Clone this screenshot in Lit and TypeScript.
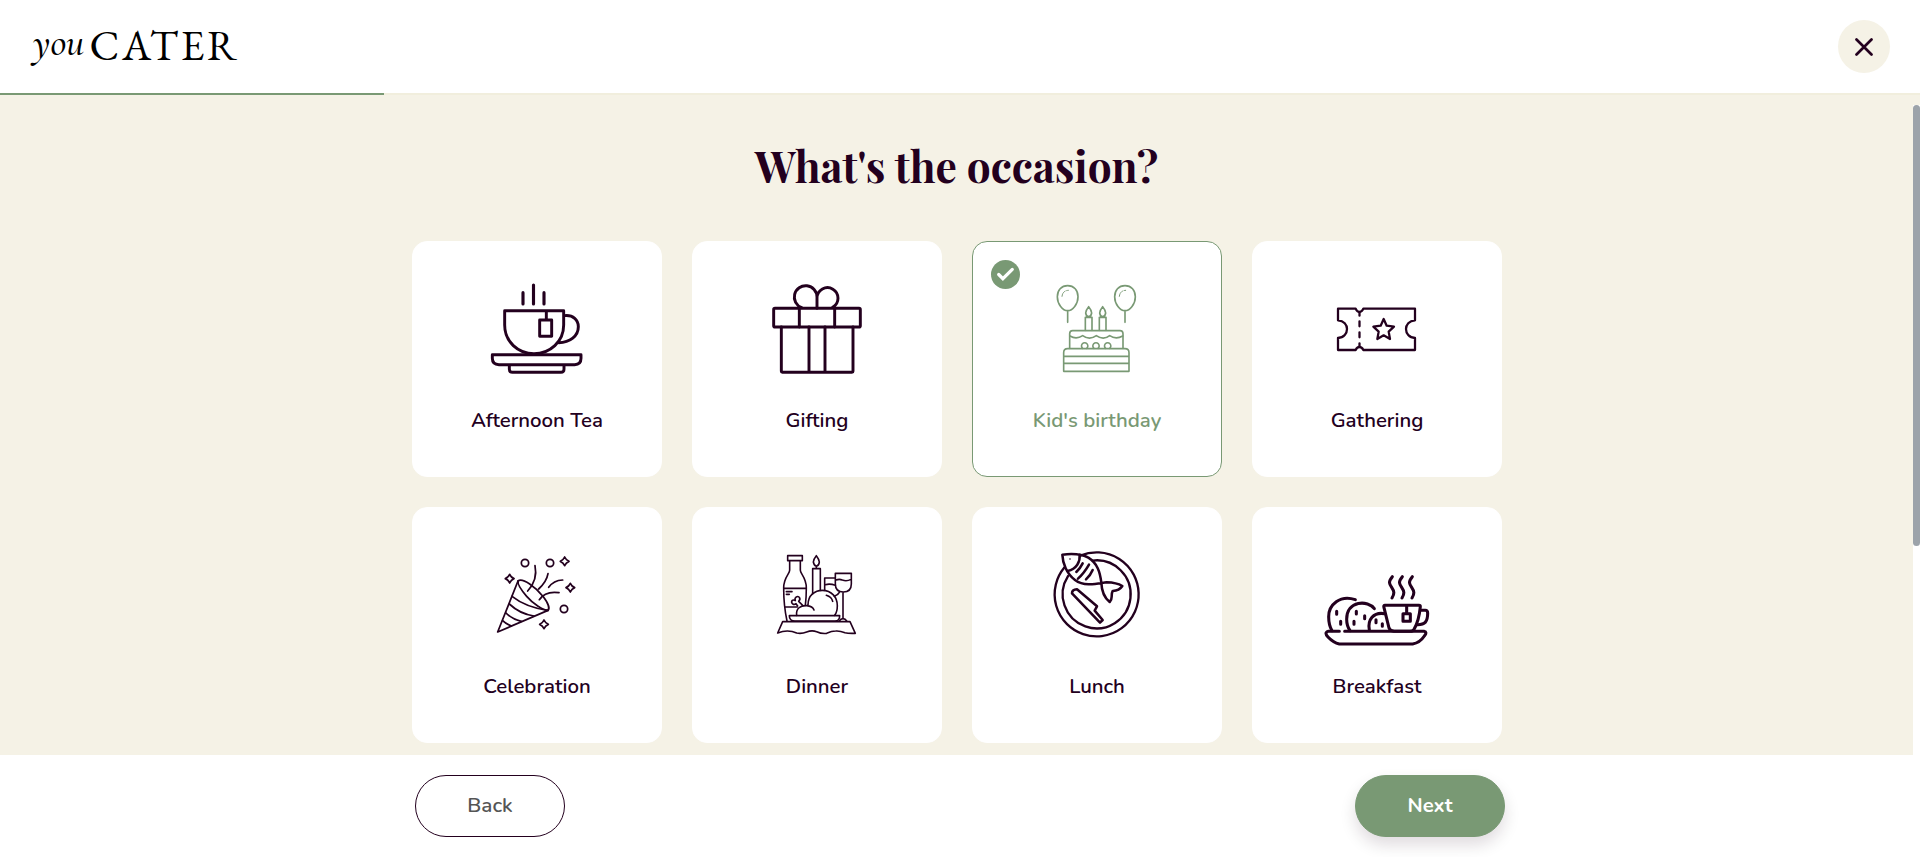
import { LitElement, html, css, svg } from "lit";
import type { SVGTemplateResult } from "lit";
import { customElement, property, state } from "lit/decorators.js";
import { classMap } from "lit/directives/class-map.js";
import { styleMap } from "lit/directives/style-map.js";

const sparkle = (x: number, y: number) => svg`
  <path transform="translate(${x} ${y})" d="M0-13Q4-4 13 0Q4 4 0 13Q-4 4-13 0Q-4-4 0-13Z"/>`;

const balloon = (x: number) => svg`
  <g transform="translate(${x} 0)">
    <path d="M0 167C19 167 31 181 31 200C31 222 15 242 0 242C-15 242-31 222-31 200C-31 181-19 167 0 167ZM0 242V277"/>
    <path stroke-width="3" stroke-dasharray="8 4 7 5" d="M-17 199Q-15 182 2 181"/>
  </g>`;

const candle = (x: number) => svg`
  <path transform="translate(${x} 0)"
    d="M-10 301V262H10V301M0 230Q-9 241-9 249Q-7 260 0 260Q7 260 9 249Q9 241 0 230Z"/>`;

const icons: Record<string, SVGTemplateResult> = {
  tea: svg`<g stroke-width="8.8">
    <path stroke-width="9.4" d="M369 188V222M400.5 165V222M432 188V222"/>
    <path d="M314 242H491V285C491 335 450 371 402 371C354 371 314 335 314 285ZM439 244V270M419 270H455V319H419Z"/>
    <path d="M493 257C520 254 535 270 535 290C535 318 510 337 476 338"/>
    <path d="M277 374H543V385Q543 404 524 404H297Q277 404 277 385ZM328 404V418Q328 427 337 427H483Q492 427 492 418V404"/>
  </g>`,
  gift: svg`<g stroke-width="8.8">
    <rect x="281" y="235" width="260" height="56" rx="4"/>
    <path d="M358 235V291M464 235V291M304 291V424Q304 427 307 427H516Q519 427 519 424V291M387 291V427M435 291V427"/>
    <path d="M411 235V201A34 34 0 1 0 365 233M411 204A31.5 31.5 0 1 1 458 232"/>
  </g>`,
  birthday: svg`<g stroke-width="4.9">
    ${balloon(323)}${balloon(495)}${candle(386)}${candle(428)}
    <path d="M329 355V311Q329 302 338 302H480Q489 302 489 311V355"/>
    <path d="M330 318Q349 330 368 317Q388 332 409 317Q430 332 449 317Q468 330 488 318"/>
    <path d="M368 355A9.5 9.5 0 1 1 380 355M402 355A9.5 9.5 0 1 1 414 355M437 355A9.5 9.5 0 1 1 449 355"/>
    <path d="M311 424V368Q311 356 323 356H495Q507 356 507 368V424ZM311 379H507M311 400H507"/>
  </g>`,
  ticket: svg`<g stroke-width="6.8">
    <path d="M294 236H347Q351 246 358 246Q366 246 370 236H525V271C507 272 498 284 498 297C498 310 507 323 525 324V360H370Q366 351 358 351Q351 351 347 360H294V324C312 323 321 310 321 297C321 284 312 272 294 271Z"/>
    <path d="M358.5 248V257M358.5 274V289M358.5 307V322M358.5 340V349"/>
    <path d="M431 267L440 287L462 290L446 305L450 327L431 316L412 327L416 305L400 290L422 287Z"/>
  </g>`,
  popper: svg`<g stroke-width="5.2">
    <path d="M354 243L293 396L444 331"/>
    <path d="M354 243C368 232 408 262 430 290C446 311 449 326 444 331C430 332 400 312 380 289C362 268 352 252 354 243Z"/>
    <path d="M336 289Q378 322 444 331M328 312Q360 342 402 348M318 339Q335 357 364 364M308 362Q318 372 334 378"/>
    <path d="M405 197Q414 240 383 273M444 221Q440 245 416 267M446 262Q461 241 488 240M418 299Q436 272 477 278"/>
    <circle cx="375" cy="189" r="11"/><circle cx="450" cy="189" r="11"/><circle cx="492" cy="327" r="11"/>
    ${sparkle(329, 236)}${sparkle(494, 184)}${sparkle(511, 263)}${sparkle(432, 373)}
  </g>`,
  dinner: svg`<g stroke-width="4.8">
    <path d="M323 167H367V182H323ZM329 182V211C329 222 311 232 311 264C311 300 316 340 321 363M361 182V211C361 222 379 232 379 264C379 285 378 300 376 316M311 265H379M315 321H352M319 275H336M319 283H328"/>
    <path d="M353 318L348 311C341 317 332 309 336 302C340 298 346 302 346 302C342 293 352 287 357 291C362 296 360 300 356 304L368 316"/>
    <path d="M398 282V206H421V271M409 206V199M409 167Q400 178 400 186Q402 197 409 199Q417 197 418 186Q417 177 409 167Z"/>
    <path d="M466 220H514V252C514 268 504 276 490 276C476 276 466 268 466 252ZM468 240Q478 236 487 240Q500 245 513 238M489 276V356M478 363Q482 356 489 356Q496 356 500 363"/>
    <path d="M466 234H434V271M436 254Q450 250 466 256M463 289Q474 285 478 277"/>
    <path d="M384 315C384 285 405 271 427 271C455 271 472 292 472 317C472 330 470 338 464 346M350 346C347 325 362 316 380 317C392 318 400 324 402 330M439 286Q455 291 458 304"/>
    <path d="M328 347H479Q479 363 465 363H345Q328 363 328 347Z"/>
    <path d="M308 365L293 399Q308 393 322 393Q337 393 350 399Q365 402 380 396Q395 390 410 395Q425 402 440 400Q455 393 467 393Q480 392 495 398Q505 401 526 400L510 365Z"/>
  </g>`,
  lunch: svg`<g stroke-width="7.6">
    <path stroke-width="7" d="M361 167A126 126 0 1 1 313 202.6M398 181.7A102 102 0 1 1 324 228.1"/>
    <path d="M307 164C340 160 365 162 385 173C412 190 420 215 424 248C425 275 435 295 449 306Q455 300 455 290Q455 278 458 273Q478 272 487 258Q470 248 440 247C415 250 375 262 345 240C320 222 308 190 307 164Z"/>
    <path d="M359 164C361 185 350 207 323 213M368 190Q360 206 349 216M387 194Q372 220 354 236M398 210Q392 225 378 238"/>
    <path d="M336 280Q336 269 351 268L411 319L404 332L428 360L420 368Z"/>
    <path stroke-width="5" d="M330 177V177.1"/>
  </g>`,
  breakfast: svg`<g stroke-width="9.2">
    <path d="M457 230C444 246 448 252 455 262C463 274 464 281 456 294M487 230C474 246 478 252 485 262C493 274 494 281 486 294M517 230C504 246 508 252 515 262C523 274 524 281 516 294"/>
    <path d="M434 316H537Q541 316 541 320C538 350 533 370 522 388Q519 394 510 394H462Q450 392 447 384L432 323Q430 316 434 316ZM500 318V340M489 341H511V364H489Z"/>
    <path d="M543 331H556Q563 331 563 340C563 365 555 374 533 374"/>
    <path d="M346 299C300 283 266 315 266 350Q266 375 276 392M403 326C385 300 320 300 320 358Q320 378 330 392M434 341C400 335 382 360 388 390"/>
    <path d="M290 334V343M302 364V373M349 334V342M342 364V373M374 347V356M408 359V368M427 371V379"/>
    <path d="M298 394H264Q252 398 264 411Q280 428 298 432H518Q540 428 553 408Q563 396 552 394H314"/>
  </g>`,
};

@customElement("occasion-card")
export class OccasionCard extends LitElement {
  @property() label = "";
  @property() icon = "";
  @property() origin = "231 141";
  @property({ type: Boolean }) selected = false;

  static styles = css`
    :host { display: block; }
    .card {
      box-sizing: border-box;
      position: relative;
      width: 250px;
      height: 236px;
      padding: 35px 0 0;
      border: 1px solid #fff;
      border-radius: 15px;
      background: #fff;
      color: #23001e;
      display: flex;
      flex-direction: column;
      align-items: center;
      cursor: pointer;
    }
    .selected { border-color: #799974; color: #799974; }
    .icon {
      width: 120px;
      height: 104px;
      fill: none;
      stroke: currentColor;
      stroke-linecap: round;
      stroke-linejoin: round;
    }
    .label {
      margin-top: 26px;
      font: 600 20.4px/27px Nunito, Lato, "Open Sans", sans-serif;
      white-space: nowrap;
    }
    .selected .label { font-weight: 650; }
    .badge { position: absolute; left: 18px; top: 18px; width: 29px; height: 29px; }
  `;

  render() {
    return html`
      <div class=${classMap({ card: true, selected: this.selected })}>
        ${this.selected
          ? html`<svg class="badge" viewBox="0 0 29 29">
              <circle cx="14.5" cy="14.5" r="14.5" fill="#799974" />
              <path d="M7.7 14.5L11.9 18.7L21.3 9.4" fill="none" stroke="#fff" stroke-width="3.2" stroke-linecap="round" />
            </svg>`
          : null}
        <svg class="icon" viewBox="${this.origin} 360 312">${icons[this.icon]}</svg>
        <div class="label">${this.label}</div>
      </div>
    `;
  }
}

@customElement("app-root")
export class AppRoot extends LitElement {
  @state() private selected = "Kid's birthday";
  private progress = 20;
  private occasions = [
    { label: "Afternoon Tea", icon: "tea" },
    { label: "Gifting", icon: "gift" },
    { label: "Kid's birthday", icon: "birthday" },
    { label: "Gathering", icon: "ticket" },
    { label: "Celebration", icon: "popper" },
    { label: "Dinner", icon: "dinner" },
    { label: "Lunch", icon: "lunch" },
    { label: "Breakfast", icon: "breakfast" },
  ];

  static styles = css`
    :host {
      display: flex;
      flex-direction: column;
      height: 100vh;
      overflow: hidden;
      background: #fff;
      color: #23001e;
      font-family: Nunito, Lato, "Open Sans", sans-serif;
    }
    .header {
      flex: 0 0 93px;
      box-sizing: border-box;
      padding: 0 30px 0 28px;
      display: flex;
      align-items: center;
      justify-content: space-between;
    }
    .logo { width: 220px; height: 93px; fill: #000; }
    .you { font: italic 500 39px "Cormorant Garamond", "Liberation Serif", serif; }
    .cater { font: 42px "EB Garamond", "Liberation Serif", serif; letter-spacing: 2.7px; }
    .close {
      width: 52px;
      height: 53px;
      padding: 0;
      border: 0;
      border-radius: 50%;
      background: #f5f2e6;
      display: grid;
      place-items: center;
      cursor: pointer;
    }
    .cross { width: 18px; height: 18px; stroke: #23001e; stroke-width: 2.7; stroke-linecap: round; }
    .track { flex: 0 0 2px; background: #f1eedd; }
    .bar { height: 2px; background: #799974; }
    .main { flex: 1; min-height: 0; display: flex; background: #f5f2e6; }
    .content { flex: 1; display: flex; flex-direction: column; align-items: center; overflow: hidden; }
    .title { flex: none; margin: 43px 0 0; font: 700 42.4px/56px "Playfair Display", "Liberation Serif", serif; }
    .grid { display: grid; grid-template-columns: repeat(4, 250px); gap: 30px; margin: 47px 0 0 1px; }
    .scroll { flex: 0 0 7px; margin-top: 10px; background: #fff; }
    .thumb { height: 441px; border-radius: 4px; background: #9ca3aa; }
    .footer { flex: 0 0 102px; box-sizing: border-box; padding-top: 20px; display: flex; justify-content: center; }
    .actions { width: 1090px; display: flex; justify-content: space-between; align-items: flex-start; }
    .button {
      box-sizing: border-box;
      width: 150px;
      height: 62px;
      padding: 0 0 2px;
      border: 1px solid #23001e;
      border-radius: 31px;
      background: #fff;
      color: #555;
      font: 600 20.6px Nunito, Lato, "Open Sans", sans-serif;
      cursor: pointer;
    }
    .next {
      border-color: #799974;
      background: #799974;
      color: #fff;
      font-weight: 700;
      font-size: 20.3px;
      box-shadow: 0 8px 16px rgba(35, 0, 30, 0.14);
    }
  `;

  render() {
    return html`
      <header class="header">
        <svg class="logo" viewBox="28 0 220 93" role="img" aria-label="you CATER">
          <text class="you" x="33" y="54.5">you</text>
          <text class="cater" x="89.5" y="60">CATER</text>
        </svg>
        <button class="close" aria-label="Close">
          <svg class="cross" viewBox="0 0 18 18"><path d="M1.5 1.5L16.5 16.5M16.5 1.5L1.5 16.5" /></svg>
        </button>
      </header>
      <div class="track"><div class="bar" style=${styleMap({ width: `${this.progress}%` })}></div></div>
      <main class="main">
        <div class="content">
          <h1 class="title">What's the occasion?</h1>
          <div class="grid">
            ${this.occasions.map(
              (o, i) => html`<occasion-card
                .label=${o.label}
                .icon=${o.icon}
                .origin=${i < 4 ? "231 141" : "231 129"}
                .selected=${this.selected === o.label}
                @click=${() => (this.selected = o.label)}
              ></occasion-card>`
            )}
          </div>
        </div>
        <div class="scroll"><div class="thumb"></div></div>
      </main>
      <footer class="footer">
        <div class="actions">
          <button class="button">Back</button>
          <button class="button next">Next</button>
        </div>
      </footer>
    `;
  }
}
